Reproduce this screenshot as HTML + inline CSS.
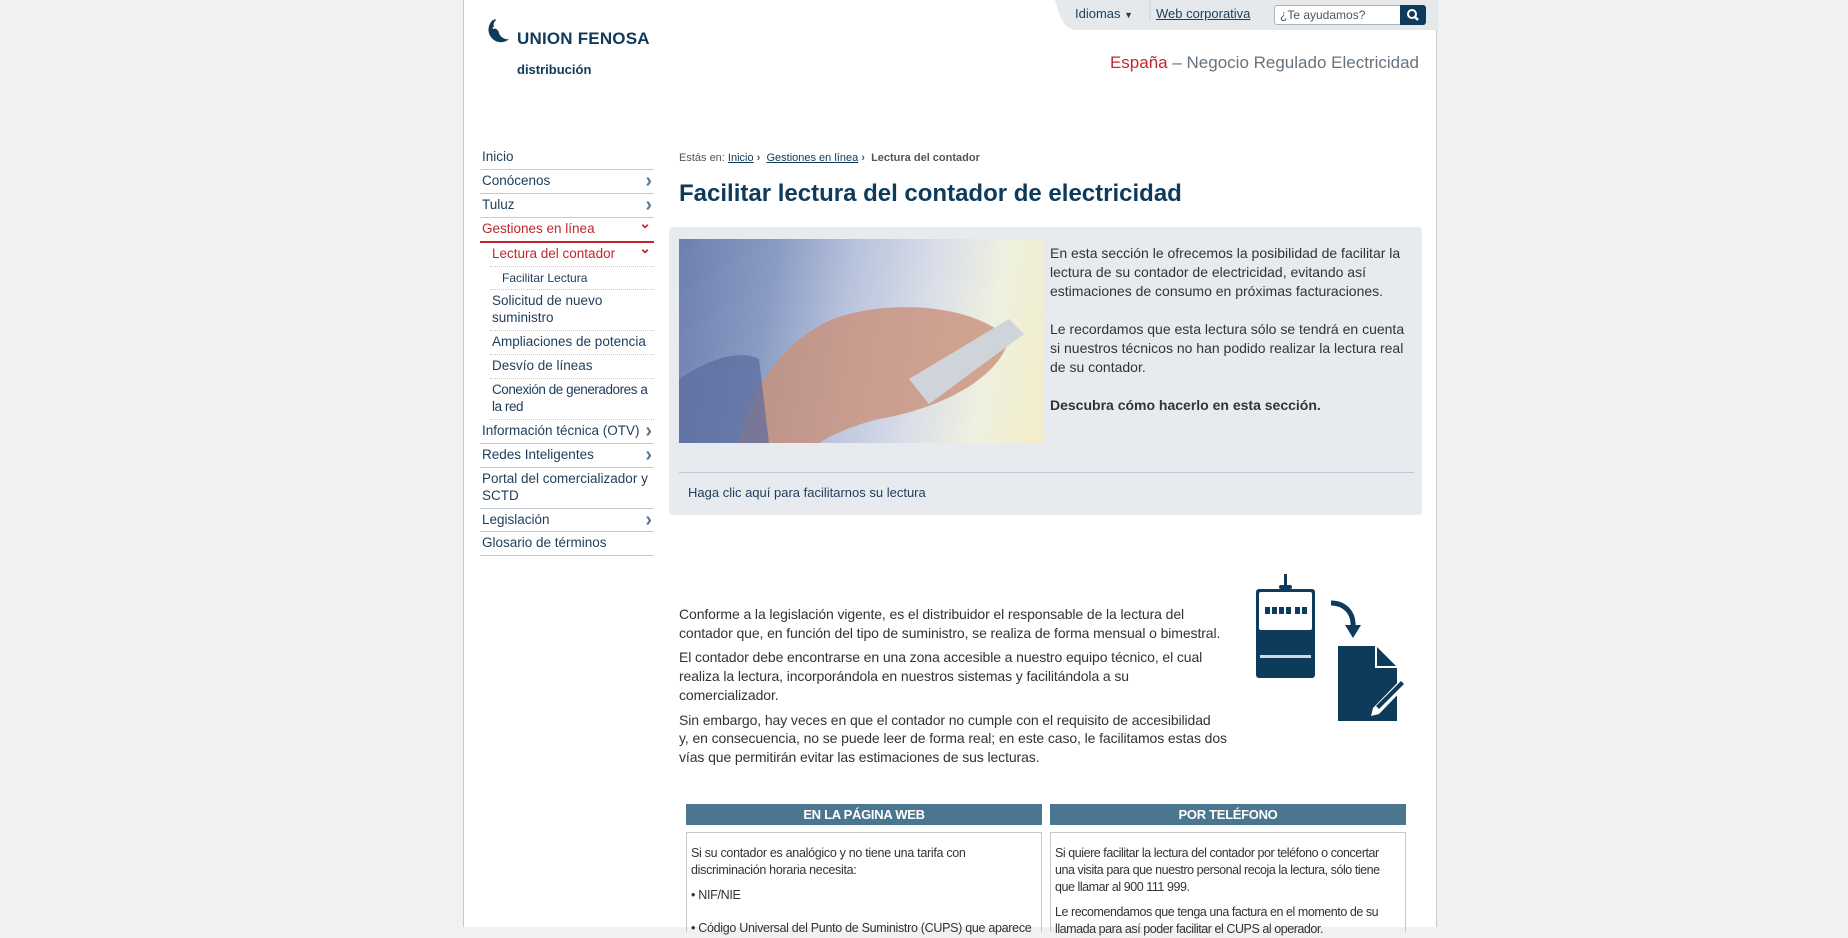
<!DOCTYPE html>
<html><head><meta charset="utf-8"><style>
*{margin:0;padding:0;box-sizing:border-box}
body{width:1848px;height:927px;overflow:hidden;background:#f1f1f1;font-family:"Liberation Sans",Arial,sans-serif;color:#333}
#page{position:absolute;left:463px;top:0;width:974px;height:927px;background:#fff;border-left:1px solid #c9c9c9;border-right:1px solid #c9c9c9}
.abs{position:absolute}
a{color:#0e3a5c}
.nav{position:absolute;left:16px;top:146px;width:174px;font-size:13.5px;color:#1d3d5c}
.nav div{position:relative;border-bottom:1px solid #c3cbd3;padding:3px 2px 3px 2px;line-height:16.9px}
.nav .ch:after{content:"›";position:absolute;right:2px;top:1px;font-size:20px;font-weight:bold;color:#5b7890;line-height:20px}
.nav .red{color:#c1272d;border-bottom:2px solid #c1272d}
.nav .dn:after{content:"⌄";position:absolute;right:3px;top:-3px;font-size:14px;color:#c1272d;font-weight:bold}
.nav .sub{margin-left:10px;border-bottom:1px dotted #c3cbd3}
.nav .sub2{margin-left:10px;padding-left:12px;font-size:12px;border-bottom:1px dotted #c3cbd3}
p{margin:0}
.body p{font-size:14px;line-height:18.7px;color:#333;margin-bottom:6px}
.th{position:absolute;height:21px;background:#4a7690;color:#fff;font-weight:bold;font-size:13px;text-align:center;line-height:21px;letter-spacing:-0.3px}
.tb{position:absolute;border:1px solid #c8c8c8;border-bottom:none;top:832px;height:100px;padding:12px 4px;font-size:12.5px;line-height:17px;color:#333;letter-spacing:-0.3px}
.tb p{margin-bottom:8px}
</style></head><body>
<div id="page">
<svg class="abs" style="left:22px;top:18px" width="30" height="28" viewBox="0 0 30 28"><path d="M7 2 C2 6 1 14 5 19 C9 25 18 26 23 21 C19 22 14 19 13 15 C12 11 9 10 7 11 C6 8 7 5 9 3 Z" fill="#0e3a5c"/><path d="M9 1 C6 3 5 6 6 9 L8 9 C7 6 8 4 10 2Z" fill="#0e3a5c"/></svg>
<div class="abs" style="left:53px;top:29px;font-size:17px;font-weight:bold;color:#0e3a5c;letter-spacing:0.2px">UNION FENOSA</div>
<div class="abs" style="left:53px;top:62px;font-size:13px;font-weight:bold;color:#0e3a5c">distribución</div>
<svg class="abs" style="left:583px;top:0" width="391" height="31"><path d="M0 0 L8 0 C12 14 16 30 30 30 L391 30 L391 0Z" fill="#e5e9ec"/><line x1="103" y1="0" x2="103" y2="20" stroke="#c9ced3"/></svg>
<div class="abs" style="left:611px;top:6px;font-size:13px;color:#1d3d5c">Idiomas <span style="font-size:9px">▼</span></div>
<div class="abs" style="left:692px;top:6px;font-size:13px;color:#1d3d5c;text-decoration:underline">Web corporativa</div>
<div class="abs" style="left:810px;top:5px;width:152px;height:20px;background:#fff;border:1px solid #aab3bb;border-radius:3px;font-size:12px;color:#555;padding:2px 5px">¿Te ayudamos?</div>
<div class="abs" style="left:936px;top:5px;width:26px;height:20px;background:#0e3a5c;border-radius:0 3px 3px 0"><svg width="26" height="20"><circle cx="12" cy="9" r="4" stroke="#fff" stroke-width="2" fill="none"/><line x1="15" y1="12" x2="18" y2="15" stroke="#fff" stroke-width="2.5"/></svg></div>
<div class="abs" style="right:17px;top:53px;font-size:17px;color:#66737e"><span style="color:#c1272d">España</span> – Negocio Regulado Electricidad</div>
<div class="nav">
<div>Inicio</div>
<div class="ch">Conócenos</div>
<div class="ch">Tuluz</div>
<div class="red dn">Gestiones en línea</div>
<div class="sub red dn">Lectura del contador</div>
<div class="sub2">Facilitar Lectura</div>
<div class="sub">Solicitud de nuevo suministro</div>
<div class="sub">Ampliaciones de potencia</div>
<div class="sub">Desvío de líneas</div>
<div class="sub" style="letter-spacing:-0.45px;padding-right:0">Conexión de generadores a la red</div>
<div class="ch">Información técnica (OTV)</div>
<div class="ch">Redes Inteligentes</div>
<div>Portal del comercializador y SCTD</div>
<div class="ch">Legislación</div>
<div>Glosario de términos</div>
</div>
<div class="abs" style="left:215px;top:152px;font-size:11px;color:#555">Estás en: <a style="text-decoration:underline">Inicio</a> <b>›</b> &nbsp;<a style="text-decoration:underline">Gestiones en línea</a> <b>›</b> &nbsp;<b style="color:#555">Lectura del contador</b></div>
<div class="abs" style="left:215px;top:180px;font-size:24px;font-weight:bold;color:#0e3a5c">Facilitar lectura del contador de electricidad</div>
<div class="abs" style="left:205px;top:227px;width:753px;height:288px;background:#e7ebef;border-radius:4px"></div>
<div class="abs" style="left:215px;top:239px;width:364px;height:204px;background:linear-gradient(100deg,#6d7fae 0%,#8a9bc4 25%,#b8c3dc 45%,#d9dde8 65%,#eef0e0 82%,#f3eec8 100%)">
<svg width="364" height="204"><path d="M60 204 C70 150 110 90 170 75 C230 60 300 70 330 100 C320 140 260 170 200 180 C160 190 140 204 140 204Z" fill="#c9917a" opacity="0.8"/><path d="M0 140 C30 120 60 110 80 120 L90 204 L0 204Z" fill="#5a6b9c" opacity="0.7"/><path d="M230 140 L330 80 L345 95 L250 165Z" fill="#cfd3da"/></svg></div>
<div class="abs" style="left:586px;top:244px;width:365px;font-size:14px;line-height:19px;color:#333">
<p>En esta sección le ofrecemos la posibilidad de facilitar la lectura de su contador de electricidad, evitando así estimaciones de consumo en próximas facturaciones.</p><br>
<p>Le recordamos que esta lectura sólo se tendrá en cuenta si nuestros técnicos no han podido realizar la lectura real de su contador.</p><br>
<p><b>Descubra cómo hacerlo en esta sección.</b></p></div>
<div class="abs" style="left:215px;top:472px;width:735px;border-top:1px solid #bfc7cf"></div>
<div class="abs" style="left:224px;top:485px;font-size:13px;color:#1d3d5c">Haga clic aquí para facilitarnos su lectura</div>
<div class="abs body" style="left:215px;top:605px;width:549px;letter-spacing:-0.1px">
<p>Conforme a la legislación vigente, es el distribuidor el responsable de la lectura del contador que, en función del tipo de suministro, se realiza de forma mensual o bimestral.</p>
<p>El contador debe encontrarse en una zona accesible a nuestro equipo técnico, el cual realiza la lectura, incorporándola en nuestros sistemas y facilitándola a su comercializador.</p>
<p>Sin embargo, hay veces en que el contador no cumple con el requisito de accesibilidad<br>y, en consecuencia, no se puede leer de forma real; en este caso, le facilitamos estas dos vías que permitirán evitar las estimaciones de sus lecturas.</p>
</div>
<svg class="abs" style="left:780px;top:570px" width="170" height="160" viewBox="0 0 170 160">
<rect x="40" y="4" width="3" height="13" fill="#0e3a5c"/><rect x="35" y="15" width="13" height="4" rx="2" fill="#0e3a5c"/>
<rect x="12" y="19" width="59" height="89" rx="3" fill="#0e3a5c"/><rect x="15" y="22" width="53" height="38" rx="2" fill="#fff"/>
<g fill="#0e3a5c"><rect x="21" y="37" width="5" height="7"/><rect x="28" y="37" width="5" height="7"/><rect x="35" y="37" width="5" height="7"/><rect x="42" y="37" width="5" height="7"/><rect x="51" y="37" width="5" height="7"/><rect x="58" y="37" width="5" height="7"/></g>
<rect x="16" y="85" width="51" height="3" fill="#cfd8e0"/>
<path d="M87 33 C100 33 110 42 109 57" stroke="#0e3a5c" stroke-width="5" fill="none"/><path d="M101 55 L117 55 L109 68Z" fill="#0e3a5c"/>
<path d="M94 76 L132 76 L153 97 L153 151 L94 151Z" fill="#0e3a5c"/><path d="M132 76 L132 97 L153 97" fill="none" stroke="#fff" stroke-width="2"/>
<path d="M129 138 L158 108 L164 114 L135 144 L127 146Z" fill="#fff"/><path d="M132 136 L157 111 L160 114 L135 139Z" fill="#0e3a5c"/>
</svg>
<div class="th" style="left:222px;top:804px;width:356px">EN LA PÁGINA WEB</div>
<div class="th" style="left:586px;top:804px;width:356px">POR TELÉFONO</div>
<div class="tb" style="left:222px;width:356px;padding-right:4px"><p>Si su contador es analógico y no tiene una tarifa con<br>discriminación horaria necesita:</p><p>• NIF/NIE</p><p style="margin-top:16px;white-space:nowrap">• Código Universal del Punto de Suministro (CUPS) que aparece</p></div>
<div class="tb" style="left:586px;width:356px;letter-spacing:-0.45px"><p>Si quiere facilitar la lectura del contador por teléfono o concertar una visita para que nuestro personal recoja la lectura, sólo tiene que llamar al 900 111 999.</p><p>Le recomendamos que tenga una factura en el momento de su llamada para así poder facilitar el CUPS al operador.</p></div>
</div>
</body></html>
